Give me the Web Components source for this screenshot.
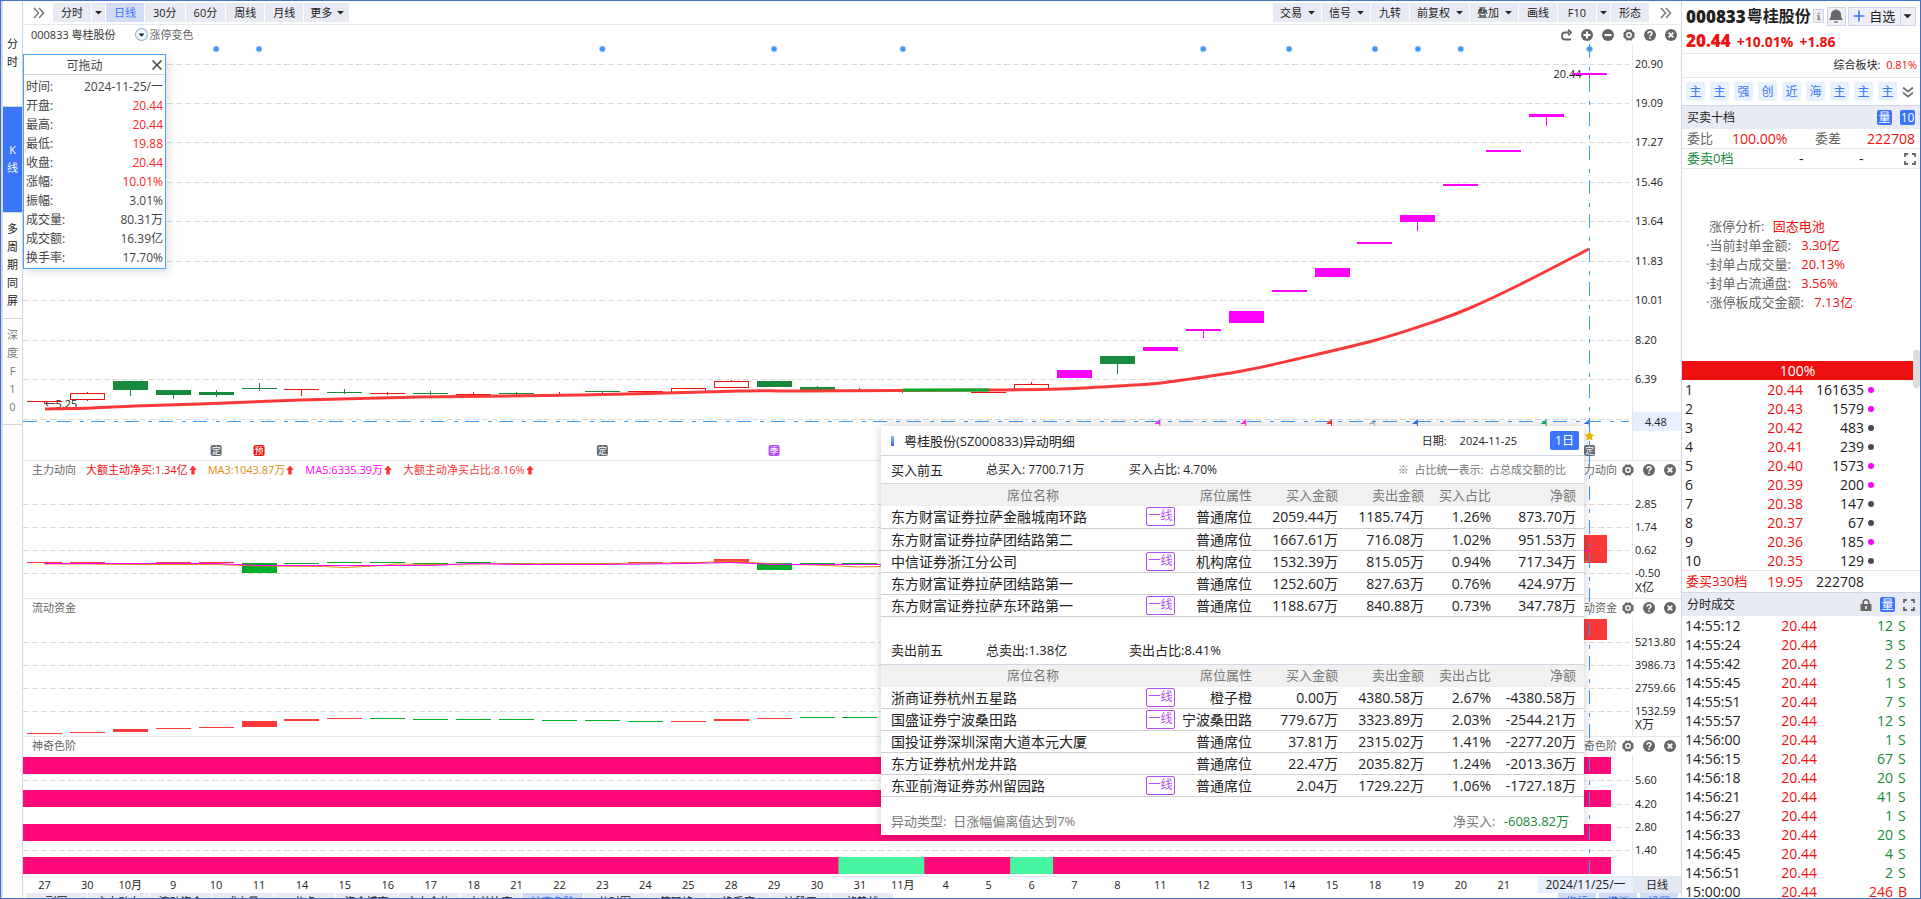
<!DOCTYPE html>
<html lang="zh-CN">
<head>
<meta charset="utf-8">
<title>000833 粤桂股份</title>
<style>
html,body{margin:0;height:100%;overflow:hidden;background:#fff}
body{font:11px/18px "Open Sans","Noto Sans CJK SC",sans-serif;color:#222;
--red:#f01010;--green:#178a3c;--mag:#f0f;--blue:#3a75fa;--line:#e6e8f0;--edge:#d2d6e4;--bar:#e9ebf4;--grey:#666}
</style>
</head>
<body>
<stock-app></stock-app>
<script>
const RESET = `*{box-sizing:border-box}button{font:inherit;color:inherit;border:0;padding:0;margin:0;background:none;white-space:nowrap}
svg{display:block}table{border-collapse:collapse;border-spacing:0}td,th{padding:0;font-weight:400}`;
function define(tag, css, html, after) {
  customElements.define(tag, class extends HTMLElement {
    constructor() { super(); this.attachShadow({ mode: 'open' }); }
    connectedCallback() {
      this.shadowRoot.innerHTML = `<style>${RESET}${css}</style>${html(this)}`;
      if (after) after(this);
    }
  });
}

/* ---------- icons ---------- */
const ICONS = {
  redo: '<path d="M9 3.5H5a3 3 0 0 0-3 3v1a3 3 0 0 0 3 3h6M8 .8l3.2 2.7L8 6.2" fill="none" stroke="#666" stroke-width="1.8"/>',
  plus: '<circle cx="6" cy="6" r="6" fill="#666"/><path d="M6 2.5v7M2.5 6h7" stroke="#fff" stroke-width="2"/>',
  minus: '<circle cx="6" cy="6" r="6" fill="#666"/><path d="M2.5 6h7" stroke="#fff" stroke-width="2"/>',
  gear: '<path d="M3.4.4h1.8l.8.9.8-.9h1.8l1 2 1.3.6 1 2-.9 1 .9 1-1 2-1.3.6-1 2H6.800l-.8-.9-.8.9H3.400l-1-2L1.100 9l-1-2 .9-1-.9-1 1-2 1.300-.6z" fill="#666"/><circle cx="6" cy="6" r="2.900" fill="#fff"/><circle cx="6" cy="6" r="1.500" fill="#666"/>',
  help: '<circle cx="6" cy="6" r="6" fill="#666"/><path d="M4 4.700C4 2 8 2 8 4.500 8 6 6 5.800 6 7.400M6 8.400v1.600" fill="none" stroke="#fff" stroke-width="1.500"/>',
  close: '<circle cx="6" cy="6" r="6" fill="#666"/><path d="M3.700 3.700l4.600 4.600M8.300 3.700L3.700 8.300" stroke="#fff" stroke-width="1.800"/>',
  cross: '<path d="M1.500 1.500l9 9M10.500 1.500l-9 9" stroke="#444" stroke-width="1.500"/>',
  more: '<path d="M1 1l4.500 5L1 11M6 1l4.500 5L6 11" fill="none" stroke="#777" stroke-width="1.500"/>',
  down: '<path d="M1 1.500l5 4 5-4M1 6.500l5 4 5-4" fill="none" stroke="#777" stroke-width="1.800"/>',
  caret: '<path d="M1.500 4h9L6 8.500z" fill="#222"/>',
  drop: '<circle cx="6" cy="6" r="5.500" fill="#f2f8fc" stroke="#8fb2c8"/><path d="M3.300 5h5.400L6 8z" fill="#123"/>',
  expand: '<path d="M1 4V1h3M8 1h3v3M11 8v3H8M4 11H1V8" fill="none" stroke="#666" stroke-width="1.800"/>',
  lock: '<path d="M3.200 5V3.500a2.800 2.800 0 0 1 5.600 0V5" fill="none" stroke="#666" stroke-width="1.600"/><path d="M.5 5h11v7H.5z" fill="#666"/><path d="M6 7v3" stroke="#fff" stroke-width="1.500"/>',
  bell: '<path d="M6 0v1M1 9c1-1 1.200-2 1.200-4 0-5 7.600-5 7.600 0 0 2 .2 3 1.200 4z" fill="#666" stroke="#666"/><path d="M4.500 10.500h3v1.200h-3z" fill="#666"/>',
  add: '<path d="M6 .5v11M.5 6h11" stroke="#3a75fa" stroke-width="1.600"/>',
  info: '<path d="M5 1.500h2.500v2H5zM4 5h3.500v5H9v1.200H4V10h1V6.200H4z" fill="#888"/>',
  up: '<path d="M6 .5l4.500 5.500H8v5.500H4V6H1.500z" fill="#fb3232"/>'
};
define('ui-icon', ':host{display:inline-block;width:12px;height:12px;flex:none}svg{width:100%;height:100%}',
  el => `<svg viewBox="0 0 12 12" aria-hidden="true">${ICONS[el.getAttribute('name')]}</svg>`);

/* ---------- left navigation ---------- */
define('side-rail', `:host{display:block;border-left:2px solid #d5d9e8;border-right:1px solid var(--edge)}
button{display:flex;flex-direction:column;align-items:center;justify-content:center;width:100%;height:106px;padding-bottom:2px;border-bottom:1px solid var(--edge);line-height:18px}
button:first-child{height:105px}.on{background:var(--blue);color:#fff}.dim{color:#777}`,
  () => [['分时', ''], ['K线', 'on'], ['多周期同屏', ''], ['深度F10', 'dim']].map(([t, c]) =>
    `<button class="${c}" aria-label="${t}">${[...t].map(x => `<span>${x}</span>`).join('')}</button>`).join(''));

/* ---------- toolbar ---------- */
define('chart-toolbar', `:host{display:flex;align-items:center;gap:1px;height:24px;flex:none;padding:0 9px 0 10px;border-bottom:1px solid var(--line)}
button{height:19px;min-width:38px;padding:0 8px;background:var(--bar);display:flex;align-items:center;justify-content:center}
.c{gap:4px;padding:0 4px 0 6px}.sp~.c{gap:5px;padding:0 5px 0 7px}.a{min-width:13px;padding:0;}.on{background:#d2dcf6;color:var(--blue)}
.a ui-icon,.c ui-icon{width:9px;height:9px}.m{background:none;min-width:12px;padding:0;margin-right:7px}.sp{flex:1}.r{margin:0 0 0 10px}`,
  () => {
    const b = t => t === '▾' ? '<button class="a" aria-label="展开"><ui-icon name="caret"></ui-icon></button>'
      : t.endsWith('▾') ? `<button class="c">${t.slice(0, -1)}<ui-icon name="caret"></ui-icon></button>`
      : `<button class="${t === '日线' ? 'on' : ''}">${t}</button>`;
    return '<button class="m" aria-label="展开"><ui-icon name="more"></ui-icon></button>' +
      ['分时', '▾', '日线', '30分', '60分', '周线', '月线', '更多▾'].map(b).join('') + '<span class="sp"></span>' +
      ['交易▾', '信号▾', '九转', '前复权▾', '叠加▾', '画线', 'F10', '▾', '形态'].map(b).join('') +
      '<button class="m r" aria-label="展开"><ui-icon name="more"></ui-icon></button>';
  });

/* ---------- plots ---------- */
const N = 37, RED = '#e61414', GREEN = '#178a3c', MAG = '#f0f', UP = '#f93a3a', DN = '#00ad28';
const rect = (x, y, w, h, f, s) => `<rect x="${x}" y="${y}" width="${w}" height="${h}" fill="${f}"${s ? ` stroke="${s}"` : ''}/>`;
const poly = (p, c, w) => `<polyline points="${p}" fill="none" stroke="${c}" stroke-width="${w}" stroke-linejoin="round"/>`;
const smooth = (p, c, w) => {
  let d = `M${p[0]}`;
  for (let i = 0; i < p.length - 1; i++) {
    const a = p[i - 1] || p[i], b = p[i], e = p[i + 1], f = p[i + 2] || e;
    d += `C${b[0] + (e[0] - a[0]) / 6} ${b[1] + (e[1] - a[1]) / 6} ${e[0] - (f[0] - b[0]) / 6} ${e[1] - (f[1] - b[1]) / 6} ${e}`;
  }
  return `<path d="${d}" fill="none" stroke="${c}" stroke-width="${w}"/>`;
};

// kind, body top, body bottom, wick top, wick bottom
const CANDLES = [
  ['r',357,358,357,360],['o',349,355,348,357],['g',337,346,337,352],['g',346,351,346,355],['g',348,351,346,353],
  ['g',344,345,339,347],['r',345,346,345,352],['g',348,349,345,350],['r',349,350,348,351],['g',349,350,347,351],
  ['r',350,351,348,351],['g',349,350,348,351],['r',350,351,348,351],['g',347,348,347,349],['r',347,348,347,349],
  ['o',344,348,344,348],['o',337,343,336,343],['g',337,343,337,343],['g',343,346,342,346],['g',346,347,344,347],
  ['g',346,347,346,349],['g',346,347,346,348],['r',348,349,348,349],['o',340,345,338,345],['m',326,334,326,334],
  ['g',312,320,312,330],['m',303,307,303,307],['m',285,287,285,294],['m',267,279,267,279],['m',246,248,246,248],
  ['m',224,233,224,233],['m',198,200,198,200],['m',171,178,171,187],['m',140,142,140,142],['m',106,108,106,108],
  ['m',70,73,70,82],['m',29,31,29,34]];
const MA = [[22,365],[69,364],[112,362],[177,360],[277,356],[397,353],[557,351],[717,347],[777,347],[966,346],[1037,345],[1077,343],[1127,340],[1160,336],[1219,327],[1274,315],[1353,296],[1413,277],[1447,264],[1496,241],[1566,205]];

const PLOTS = {
  main: {
    h: 416, grid: [[20,'20.90'],[59,'19.09'],[98,'17.27'],[138,'15.46'],[177,'13.64'],[217,'11.83'],[256,'10.01'],[296,'8.20'],[335,'6.39'],[375,'']],
    draw(k) {
      let s = `<text x="${k.x(36) - 36}" y="${k.y(30) + 4}">20.44</text><text x="${k.x(0)}" y="${k.y(360) + 4}">←5.25</text>`;
      CANDLES.forEach(([t, a, b, c, d], i) => {
        const m = Math.floor(k.x(i)), col = { r: RED, o: RED, g: GREEN, m: MAG }[t];
        s += rect(m, k.y(c), 1, k.y(d) - k.y(c), col);
        s += t === 'o' ? rect(m - 16.5, k.y(a) + .5, 34, k.y(b) - k.y(a), '#fff', RED) : rect(m - 17, k.y(a), 35, Math.max(1, k.y(b) - k.y(a)), col);
      });
      const f = (k.w - 70) / 1588;
      s += smooth(MA.map(([x, y]) => [x * f, k.y(y)]), UP, 3);
      s += poly([[k.x(20), k.y(346)], [k.x(22), k.y(346)]].join(' '), DN, 3);
      for (const i of [4, 5, 13, 17, 20, 27, 29, 31, 32, 33, 36])
        s += `<circle cx="${k.x(i)}" cy="${k.y(5)}" r="3" fill="#4595f5" stroke="#b8d8fb" stroke-width=".8"/>`;
      for (const [i, c] of [[26,'#f3e'],[28,'#f3e'],[30,'#fb3232'],[31,'#bbb'],[32,'#3a6ff5'],[35,'#0fb84a'],[36,'#3a6ff5']]) {
        const m = k.x(i), y = k.y(375);
        s += `<path d="M${m} ${y}v7h-1v-2h-5z" fill="${c}"/>`;
      }
      for (const [i, t, c] of [[4,'定','#666b75'],[5,'预','#f01010'],[13,'定','#666b75'],[17,'季','#b14cf5'],[36,'定','#666b75']])
        s += `<rect x="${k.x(i) - 5.5}" y="${k.y(401)}" width="11" height="11" rx="2" fill="${c}"/><text x="${k.x(i)}" y="${k.y(401) + 9}" text-anchor="middle" style="font-size:9px;fill:#fff">${t}</text>`;
      s += `<path transform="translate(${k.x(36)} ${k.y(392)})" d="M0-5l1.500 3.300 3.500.4-2.600 2.400.7 3.500L0 2.900l-3.100 1.700.7-3.500L-5-1.300l3.500-.4z" fill="#f5b800"/>`;
      s += rect(k.w - 48, k.y(368), 48, 19, '#e8f0ff') + `<text x="${k.w - 36}" y="${k.y(378) + 4}">4.48</text>`;
      return s;
    }
  },
  flow: {
    h: 119, grid: [[25,'2.85'],[48,'1.74'],[71,'0.62'],[94,'-0.50']], unit: [108, 'X亿'],
    draw(k) {
      const B = [[83,84,1],[83,84,1],[84,85,1],[83,84,1],[83,84,1],[84,94,0],[84,85,0],[83,84,0],[83,84,0],[84,85,0],[83,84,0],[84,85,0],[84,85,0],[84,85,0],[83,84,1],[83,84,1],[80,84,1],[84,91,0],[84,86,0],[84,85,0]];
      B[36] = [56,84,1];
      return k.bars(B) +
        poly([[0,85],[1,85],[2,85.5],[4,85.5],[5,87],[6.5,87.500],[7,88.500],[7.7,87],[8.2,85],[9,85.500],[10,85],[15,84],[16,82],[17,85],[18,86],[19,88],[20,87],[25,85]].map(([i, y]) => [k.x(i), k.y(y)]).join(' '), '#e08c14', 1) +
        poly([[0,84.500],[4,84.500],[5,86.500],[6,86.500],[9,86.500],[10,84.500],[11,85.500],[13,85.500],[15,84.500],[16,83.500],[17,85.500],[19,85.500],[34,84],[35,71.500],[36,71.500]].map(([i, y]) => [k.x(i), k.y(y)]).join(' '), MAG, 1) +
        rect(k.x(35.5), k.y(82), k.x(.5) - k.x(0), 1, '#e08c14');
    }
  },
  fund: {
    h: 119, grid: [[25,'5213.80'],[48,'3986.73'],[71,'2759.66'],[94,'1532.59']], unit: [107, 'X万'],
    draw(k) {
      const B = [[116,117,1],[115,116,1],[112,115,1],[111,112,1],[110,111,1],[104,110,1],[102,104,1],[101,102,1],[101,102,0],[102,103,0],[102,103,0],[102,103,0],[103,104,0],[103,104,0],[104,105,0],[104,105,1],[102,104,1],[101,102,1],[100,101,0],[100,101,0]];
      B[36] = [2,23,1];
      return k.bars(B);
    }
  },
  steps: {
    h: 121, grid: [[25,'5.60'],[49,'4.20'],[72,'2.80'],[95,'1.40']],
    draw(k) {
      const e = k.x(36) + k.cell / 2, P = '#ff0a78', G = '#47f5a1', a = i => k.x(i) - k.cell / 2;
      return [2, 35, 69, 102].map(y => rect(0, k.y(y), e, k.y(y + 17) - k.y(y), P)).join('') +
        rect(a(19), k.y(102), k.cell * 2, k.y(119) - k.y(102), G) + rect(a(23), k.y(102), k.cell, k.y(119) - k.y(102), G);
    }
  }
};
define('chart-plot', ':host{display:block;min-height:0;overflow:hidden}svg{width:100%;height:100%}text{font-size:11px;fill:#222}',
  () => '<svg></svg>', el => {
    const p = PLOTS[el.getAttribute('kind')], svg = el.shadowRoot.querySelector('svg');
    const paint = () => {
      const w = el.clientWidth, h = el.clientHeight, cell = (w - 70) / N;
      const k = { w, h, cell, x: i => cell * (i + .5), y: v => v * h / p.h };
      k.bars = B => B.map((b, i) => b ? rect(Math.floor(k.x(i)) - 17, k.y(b[0]), 35, Math.max(1, k.y(b[1]) - k.y(b[0])), b[2] ? UP : DN) : '').join('');
      svg.innerHTML = p.grid.map(([y, t]) => `<path d="M0 ${k.y(y) + .5}H${w - 52}" stroke="#dcdcdc" stroke-dasharray="6 3"/><text x="${w - 46}" y="${k.y(y) + 4}">${t}</text>`).join('') +
        `<path d="M${w - 48.5} 0V${h}" stroke="#e6e8f0"/>` + (p.unit ? `<text x="${w - 46}" y="${k.y(p.unit[0]) + 5}" style="font-size:12px">${p.unit[1]}</text>` : '') + p.draw(k);
    };
    paint();
    new ResizeObserver(paint).observe(el);
  });

define('sub-chart', `:host{display:flex;flex-direction:column;flex:none;height:138px;border-bottom:1px solid var(--line)}
:host([kind=steps]){height:140px}header{display:flex;align-items:center;height:18px;flex:none;padding:0 5px 0 9px;color:var(--grey)}
.v{display:flex;flex:1;gap:10px;margin-left:10px}chart-plot{flex:1}.t{display:flex;gap:9px;margin-left:5px}button{display:flex}`,
  el => `<header><span>${el.getAttribute('label')}</span><div class="v"><slot></slot></div><span>${el.getAttribute('label')}</span>
<div class="t"><button aria-label="设置"><ui-icon name="gear"></ui-icon></button><button aria-label="帮助"><ui-icon name="help"></ui-icon></button><button aria-label="关闭"><ui-icon name="close"></ui-icon></button></div></header>
<chart-plot kind="${el.getAttribute('kind')}"></chart-plot>`);
define('rise-value', ':host{display:flex;align-items:center}ui-icon{width:10px;height:10px}', () => '<slot></slot><ui-icon name="up"></ui-icon>');

define('main-chart', `:host{display:flex;flex-direction:column;flex:1;min-height:0;border-bottom:1px solid var(--line)}
header{display:flex;align-items:center;height:19px;flex:none;padding:0 4px 0 8px;color:#333}.d{display:flex;align-items:center;gap:2px;margin-left:19px;color:var(--grey)}
.d ui-icon{width:13px;height:13px}.t{display:flex;gap:9px;margin-left:auto}button{display:flex}chart-plot{flex:1}`,
  () => `<header><span>000833 粤桂股份</span><button class="d"><ui-icon name="drop"></ui-icon>涨停变色</button><div class="t">${
    [['redo','撤销'],['plus','放大'],['minus','缩小'],['gear','设置'],['help','帮助'],['close','关闭']].map(([n, t]) => `<button aria-label="${t}"><ui-icon name="${n}"></ui-icon></button>`).join('')}</div></header>
<chart-plot kind="main"></chart-plot>`);

define('cross-hair', ':host{position:absolute;inset:0;pointer-events:none}svg{width:100%;height:100%}', () => '<svg></svg>', el => {
  const paint = () => {
    const w = el.clientWidth, h = el.clientHeight, x = Math.floor((w - 70) / N * 36.5) + .5, y = h - 476.5;
    el.shadowRoot.querySelector('svg').innerHTML = `<g stroke="#3d9bf0" stroke-dasharray="14 9 4 7"><path d="M0 ${y}H${w - 52}"/><path d="M${x} 43V${h - 21}"/></g>`;
  };
  paint();
  new ResizeObserver(paint).observe(el);
});

define('date-axis', `:host{display:flex;height:16px;flex:none;line-height:16px;position:relative}
.g{flex:1;display:grid;grid-template-columns:repeat(37,minmax(0,1fr));margin-right:22px;text-align:center;white-space:nowrap}
.p{width:48px;background:#e4e8f4;text-align:center}.now{position:absolute;right:48px;top:0;width:95px;text-align:center;background:#e8f0ff;font-size:12px}`,
  () => `<div class="g">${'27 30 10月 9 10 11 14 15 16 17 18 21 22 23 24 25 28 29 30 31 11月 4 5 6 7 8 11 12 13 14 15 18 19 20 21'.split(' ').map(d => `<span>${d}</span>`).join('')}</div>
<div class="p">日线</div><time class="now" datetime="2024-11-25">2024/11/25/一</time>`);

define('indicator-tabs', `:host{display:flex;gap:1px;height:5px;flex:none;overflow:hidden;padding:0 3px}
button{flex:none;height:18px;width:61px;background:var(--bar);line-height:18px}button:first-child{width:38px}.on,.r{background:#d0dcf6;color:var(--blue)}.s{flex:1}.r{width:38px;margin-left:2px}`,
  () => ['副图', '主力动向', '流动资金', '成交量', '龙虎', '资金博弈', '主力仓位', '大单比率', '神奇色阶', '分时图', '筹码峰', '换手率', '波段王', '趋势线'].map((t, i) => `<button class="${i === 8 ? 'on' : ''}">${t}</button>`).join('') +
    '<span class="s"></span>' + ['指标', '模板', '设置'].map(t => `<button class="r">${t}</button>`).join(''));

/* ---------- floating quote card ---------- */
define('quote-card', `:host{position:absolute;left:0;top:53px;width:143px;height:215px;border:1px solid #4da3f7;background:#fff;box-shadow:3px 3px 9px #0002;font-size:12px;line-height:19px;color:#444}
header{display:flex;align-items:center;height:20px;border-bottom:1px solid var(--edge);padding:1px 2px 0}header b{flex:1;text-align:center;font-weight:400;padding-right:8px}
button{display:flex}dl{margin:2px 2px}div{display:flex;justify-content:space-between}dd{margin:0}.r{color:#fb2525}`,
  () => `<header><b>可拖动</b><button aria-label="关闭"><ui-icon name="cross"></ui-icon></button></header><dl>${
    [['时间','2024-11-25/一'],['开盘','20.44',1],['最高','20.44',1],['最低','19.88',1],['收盘','20.44',1],['涨幅','10.01%',1],['振幅','3.01%'],['成交量','80.31万'],['成交额','16.39亿'],['换手率','17.70%']]
      .map(([a, b, r]) => `<div><dt>${a}:</dt><dd class="${r ? 'r' : ''}">${b}</dd></div>`).join('')}</dl>`);

/* ---------- trading seat dialog ---------- */
define('seat-table', `:host{display:block}table{width:100%;table-layout:fixed;font-size:14px;line-height:21px}th{font-size:13px;color:#777;background:#f1f1f1;height:22px;text-align:right}
th:first-child{text-align:center;padding-left:10px}td{text-align:right;height:22px;border-bottom:1px solid #d0d0d0;white-space:nowrap}td:first-child{text-align:left;padding-left:10px}
th:last-child,td:last-child{padding-right:8px}span{display:block;width:29px;height:19px;line-height:16px;border:1px solid #b14cf5;border-radius:2px;color:#b14cf5;font-size:12px;text-align:center}
.a{width:265px}.b{width:29px}.c{width:77px}.d{width:86px}.e{width:67px}`,
  el => {
    const k = el.getAttribute('side');
    return `<table><colgroup><col class="a"><col class="b"><col class="c"><col class="d"><col class="d"><col class="e"><col></colgroup>
<thead><tr><th colspan="2">席位名称</th><th>席位属性</th><th>买入金额</th><th>卖出金额</th><th>${k}占比</th><th>净额</th></tr></thead><tbody>${
      SEATS[k].map(r => '<tr>' + r.map((c, i) => `<td>${i === 1 ? (c ? '<span>一线</span>' : '') : c}</td>`).join('') + '</tr>').join('')}</tbody></table>`;
  });
const SEATS = {
  买入: [['东方财富证券拉萨金融城南环路',1,'普通席位','2059.44万','1185.74万','1.26%','873.70万'],['东方财富证券拉萨团结路第二',0,'普通席位','1667.61万','716.08万','1.02%','951.53万'],['中信证券浙江分公司',1,'机构席位','1532.39万','815.05万','0.94%','717.34万'],['东方财富证券拉萨团结路第一',0,'普通席位','1252.60万','827.63万','0.76%','424.97万'],['东方财富证券拉萨东环路第一',1,'普通席位','1188.67万','840.88万','0.73%','347.78万']],
  卖出: [['浙商证券杭州五星路',1,'橙子橙','0.00万','4380.58万','2.67%','-4380.58万'],['国盛证券宁波桑田路',1,'宁波桑田路','779.67万','3323.89万','2.03%','-2544.21万'],['国投证券深圳深南大道本元大厦',0,'普通席位','37.81万','2315.02万','1.41%','-2277.20万'],['东方证券杭州龙井路',0,'普通席位','22.47万','2035.82万','1.24%','-2013.36万'],['东亚前海证券苏州留园路',1,'普通席位','2.04万','1729.22万','1.06%','-1727.18万']]
};
define('seat-dialog', `:host{position:absolute;right:97px;bottom:63px;width:703px;height:409px;background:#fff;box-shadow:0 0 10px #0003;font-size:13px;line-height:20px}
header{display:flex;align-items:center;height:30px;border-bottom:1px solid var(--edge);padding:0 5px 0 10px}header i{width:3px;height:10px;background:linear-gradient(#8fb4ff,#3a6ff5);margin-right:10px}
h2{font:inherit;margin:0;flex:1}header button{width:29px;height:19px;background:var(--blue);color:#fff;border-radius:2px;font-size:12px;margin-left:33px}time,.n{font-size:11px}time{margin-left:13px}label{font-size:11px}
.s{display:grid;grid-template-columns:95px 143px 1fr auto;align-items:center;height:28px;padding:0 18px 0 10px;border-bottom:1px solid var(--edge)}.q{font-size:12px}.n{color:#777}
.two{margin-top:20px}footer{display:flex;justify-content:space-between;margin-top:14px;padding:0 15px 0 10px;color:#777}footer b{font-weight:400;color:var(--green);margin-left:5px}`,
  () => `<header><i></i><h2>粤桂股份(SZ000833)异动明细</h2><label>日期:</label><time>2024-11-25</time><button>1日</button></header>
<div class="s"><span>买入前五</span><span class="q">总买入: 7700.71万</span><span class="q">买入占比: 4.70%</span><span class="n">※ &nbsp;占比统一表示: &nbsp;占总成交额的比</span></div><seat-table side="买入"></seat-table>
<div class="s two"><span>卖出前五</span><span>总卖出:1.38亿</span><span>卖出占比:8.41%</span></div><seat-table side="卖出"></seat-table>
<footer><span>异动类型: &nbsp;日涨幅偏离值达到7%</span><span>净买入: <b>-6083.82万</b></span></footer>`);

/* ---------- right panel ---------- */
define('section-bar', `:host{display:flex;align-items:center;height:24px;border-top:1px solid var(--edge);background:#e8ebf4;padding:0 5px;font-size:12px;gap:8px}span{flex:1}::slotted(*){flex:none}`,
  el => `<span>${el.getAttribute('label')}</span><slot></slot>`);
define('chip-button', `:host{display:block}button{display:block;width:15px;height:15px;line-height:15px;border-radius:2px;background:var(--blue);color:#fff;font-size:12px;text-align:center}`, () => '<button><slot></slot></button>');
define('quote-panel', `:host{display:flex;flex-direction:column;border-left:1px solid var(--edge);font-size:14px;line-height:19px;overflow:hidden;position:relative}
:host>*{flex:none}
.name{display:flex;align-items:center;height:30px;padding:0 0 0 4px;font-weight:700;font-size:16px;white-space:nowrap}.name strong{font-size:17px;margin-right:1px}.name button{display:flex;flex:none;align-items:center;justify-content:center;height:19px;border:1px solid var(--edge);background:#eef0f6;font-size:13px;font-weight:400}
.name .i{width:11px;height:14px;margin-left:2px}.i ui-icon{width:9px}.w{width:19px;margin:0 2px 0 3px}.w ui-icon{width:14px;height:14px}.z{width:53px;gap:4px}.name .x{width:15px;border-left:0}.x ui-icon{width:11px}
.px{display:flex;align-items:baseline;gap:6px;height:23px;padding:0 0 0 4px;color:var(--red);font-weight:700;border-bottom:1px solid var(--line)}.px b{font-size:17px}
.blk{height:24px;line-height:22px;text-align:right;font-size:11px;padding-right:3px;border-bottom:1px solid var(--line)}.blk em{font-style:normal;color:var(--red);margin-left:3px}
.tags{display:flex;align-items:center;gap:5px;height:27px;padding:0 0 0 4px}.tags button{width:19px;height:19px;background:#e8f1ff;color:var(--blue);font-size:12px;border-radius:2px}.tags .dn{width:12px;background:none;display:flex;align-items:center;justify-content:center}
.row{display:grid;align-items:center;height:20px;border-bottom:1px solid var(--line);padding:0 5px}.k{font-size:13px;color:var(--grey)}.r{color:var(--red)}.g{color:var(--green)}
.a{grid-template-columns:45px 83px 1fr auto}.b{grid-template-columns:112px 60px 1fr auto;padding-right:4px}.g13{font-size:13px}
ul{list-style:none;margin:0;height:192px;padding:48px 0 0 24px;font-size:13px;color:var(--grey)}li em{font-style:normal;color:var(--red);margin-left:7px}li:first-child{padding-left:3px}li:first-child em{margin-left:5px}
.pct{height:19px;margin-right:7px;background:#ee0f0f;color:#fff;text-align:center}
table{width:100%;table-layout:fixed;white-space:nowrap}td{height:19px;text-align:right}td:first-child{text-align:left;padding-left:3px}
.bk col:nth-child(1){width:60px}.bk col:nth-child(2){width:61px}.bk col:nth-child(3){width:61px}.bk i{display:block;width:6px;height:6px;border-radius:3px;margin-left:4px;background:#4a4a55}.bk .m{background:#f0f}
.sum{border-top:1px solid var(--line);height:22px;line-height:21px;display:grid;grid-template-columns:117px 61px;text-align:right;padding-left:4px}.sum :first-child{display:flex;justify-content:space-between;text-align:left;}
.tr col:nth-child(1){width:75px}.tr col:nth-child(2){width:60px}.tr col:nth-child(3){width:76px}.tr td:last-child{text-align:left;padding-left:5px}
.thumb{position:absolute;right:0;top:349px;width:7px;height:38px;border-radius:4px;background:#dcdcdc}section-bar button{display:flex}`,
  () => `<div class="name"><strong>000833</strong>粤桂股份<button class="i" aria-label="信息"><ui-icon name="info"></ui-icon></button><button class="w" aria-label="提醒"><ui-icon name="bell"></ui-icon></button><button class="z"><ui-icon name="add"></ui-icon>自选</button><button class="x" aria-label="展开"><ui-icon name="caret"></ui-icon></button></div>
<div class="px"><b>20.44</b><span>+10.01%</span><span>+1.86</span></div>
<div class="blk">综合板块: <em>0.81%</em></div>
<div class="tags">${[...'主主强创近海主主主'].map(t => `<button>${t}</button>`).join('')}<button class="dn" aria-label="更多"><ui-icon name="down"></ui-icon></button></div>
<section-bar label="买卖十档"><chip-button>量</chip-button><chip-button>10</chip-button></section-bar>
<div class="row a"><span class="k">委比</span><span class="r">100.00%</span><span class="k">委差</span><span class="r">222708</span></div>
<div class="row b"><span class="g g13">委卖0档</span><span>-</span><span>-</span><ui-icon name="expand"></ui-icon></div>
<ul><li>涨停分析: <em>固态电池</em></li>${[['当前封单金额','3.30亿'],['封单占成交量','20.13%'],['封单占流通盘','3.56%'],['涨停板成交金额','7.13亿']].map(([a, b]) => `<li>·${a}: <em>${b}</em></li>`).join('')}</ul>
<div class="pct">100%</div>
<table class="bk"><colgroup><col><col><col><col></colgroup><tbody>${[['20.44',161635,1],['20.43',1579,1],['20.42',483],['20.41',239],['20.40',1573,1],['20.39',200,1],['20.38',147],['20.37',67],['20.36',185,1],['20.35',129]]
    .map(([p, q, m], i) => `<tr><td>${i + 1}</td><td class="r">${p}</td><td>${q}</td><td><i class="${m ? 'm' : ''}"></i></td></tr>`).join('')}</tbody></table>
<div class="sum r"><div><span class="g13">委买330档</span><span>19.95</span></div><span style="color:#222">222708</span></div>
<section-bar label="分时成交"><button aria-label="锁定"><ui-icon name="lock"></ui-icon></button><chip-button>量</chip-button><button aria-label="全屏"><ui-icon name="expand"></ui-icon></button></section-bar>
<table class="tr"><colgroup><col><col><col><col></colgroup><tbody>${[['55:12',12],['55:24',3],['55:42',2],['55:45',1],['55:51',7],['55:57',12],['56:00',1],['56:15',67],['56:18',20],['56:21',41],['56:27',1],['56:33',20],['56:45',4],['56:51',2],['00:00',246]]
    .map(([t, q]) => { const b = q === 246, c = b ? 'r' : 'g'; return `<tr><td>${b ? 15 : 14}:${t}</td><td class="r">20.44</td><td class="${c}">${q}</td><td class="${c}">${b ? 'B' : 'S'}</td></tr>`; }).join('')}</tbody></table>
<div class="thumb"></div>`);

/* ---------- shell ---------- */
define('stock-app', `:host{display:grid;grid-template-columns:22px minmax(0,1fr) 239px;height:100vh;border:1px solid #4472c4;box-sizing:border-box;overflow:hidden}
main{display:flex;flex-direction:column;min-width:0;min-height:0;position:relative}quote-panel,side-rail{min-height:0;overflow:hidden}`,
  () => `<side-rail></side-rail><main><chart-toolbar></chart-toolbar><main-chart></main-chart>
<sub-chart kind="flow" label="主力动向"><rise-value style="color:#f01010">大额主动净买:1.34亿</rise-value><rise-value style="color:#e08c14">MA3:1043.87万</rise-value><rise-value style="color:#f0f">MA5:6335.39万</rise-value><rise-value style="color:#f93a3a">大额主动净买占比:8.16%</rise-value></sub-chart>
<sub-chart kind="fund" label="流动资金"></sub-chart><sub-chart kind="steps" label="神奇色阶"></sub-chart>
<date-axis></date-axis><indicator-tabs></indicator-tabs><cross-hair></cross-hair><quote-card></quote-card><seat-dialog></seat-dialog></main><quote-panel></quote-panel>`);
</script>
</body>
</html>
